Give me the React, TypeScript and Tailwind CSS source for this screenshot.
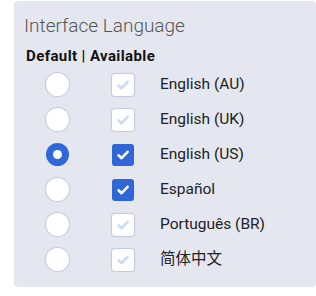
const languages = [
  { name: "English (AU)", isDefault: false, available: false },
  { name: "English (UK)", isDefault: false, available: false },
  { name: "English (US)", isDefault: true, available: true },
  { name: "Español", isDefault: false, available: true },
  { name: "Português (BR)", isDefault: false, available: false },
  { name: "简体中文", isDefault: false, available: false },
];

function Radio({ on }: { on: boolean }) {
  if (on) {
    return (
      <div className="flex h-[23px] w-[23px] items-center justify-center rounded-full bg-[#2f66d8]">
        <div className="h-[9px] w-[9px] rounded-full bg-white" />
      </div>
    );
  }
  return (
    <div className="h-[23px] w-[23px] rounded-full bg-white shadow-[0_0_1px_1px_rgba(150,160,200,0.45)]" />
  );
}

function Check({ on }: { on: boolean }) {
  return (
    <div
      className={
        on
          ? "flex h-[22px] w-[22px] items-center justify-center rounded-[3px] bg-[#2f66d8]"
          : "flex h-[22px] w-[22px] items-center justify-center rounded-[3px] bg-white shadow-[0_0_1px_1px_rgba(150,160,200,0.45)]"
      }
    >
      <svg width="14" height="14" viewBox="0 0 14 14">
        <path
          d="M2.5 7.3 L5.6 10.2 L11.6 3.8"
          fill="none"
          stroke={on ? "#ffffff" : "#c9dcf4"}
          strokeWidth="2.6"
          strokeLinecap="round"
          strokeLinejoin="round"
        />
      </svg>
    </div>
  );
}

export default function App() {
  return (
    <div className="h-[296px] w-[316px] bg-white pt-[1px] pl-[14px] font-['Roboto',sans-serif]">
      <div className="h-[286px] rounded-[4px] bg-[#e5e7f0] pl-[10px] pt-[12px]">
        <h2 className="text-[19px] font-light leading-[26px] text-[#555]">
          Interface Language
        </h2>

        <p className="mt-[8px] pl-[2px] text-[15px] font-bold leading-[18px] tracking-[0.4px] text-[#111]">
          Default | Available
        </p>

        <div className="mt-[2px] flex flex-col">
          {languages.map((lang) => (
            <div key={lang.name} className="flex h-[35px] items-center">
              <div className="ml-[22px] w-[66px]">
                <Radio on={lang.isDefault} />
              </div>
              <Check on={lang.available} />
              <span className="ml-[26px] text-[15.5px] text-[#222] font-['Roboto','Noto_Sans_CJK_SC',sans-serif]">
                {lang.name}
              </span>
            </div>
          ))}
        </div>
      </div>
    </div>
  );
}
